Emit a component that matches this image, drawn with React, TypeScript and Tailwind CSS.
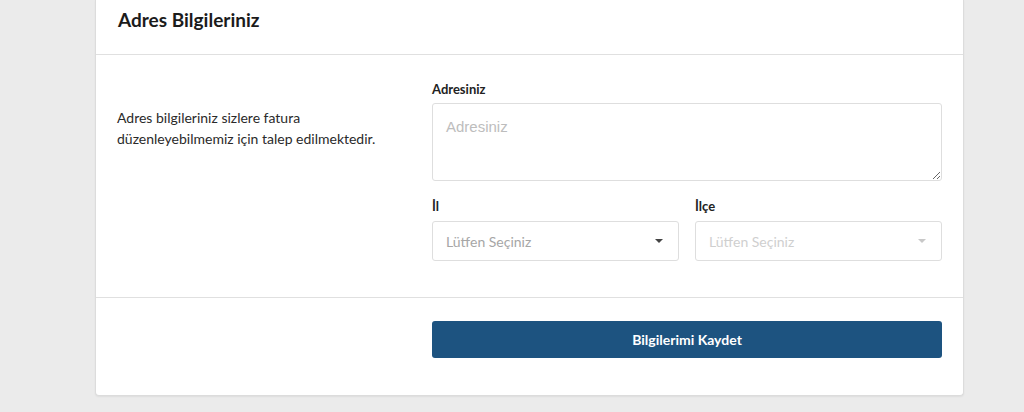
const Caret = ({ faded }: { faded?: boolean }) => (
  <svg width="8" height="4" viewBox="0 0 8 4" className={faded ? "text-[#c8c8c8]" : "text-[#444]"}>
    <path d="M0 0h8L4 4z" fill="currentColor" />
  </svg>
);

const Field = ({ label, faded }: { label: string; faded?: boolean }) => (
  <div className="flex-1">
    <label className="block text-[13px] leading-[18px] font-bold text-[#222] mb-[6px]">{label}</label>
    <div className="h-[40px] border border-[#dedede] rounded-[3px] bg-white flex items-center justify-between pl-[13px] pr-[15px]">
      <span className={`text-[14px] ${faded ? "text-[#cfcfcf]" : "text-[#a6a6a6]"}`}>Lütfen Seçiniz</span>
      <Caret faded={faded} />
    </div>
  </div>
);

export default function App() {
  return (
    <div className="min-h-[412px] bg-[#ebebeb] font-['Lato',sans-serif] overflow-hidden">
      <div className="ml-[95px] w-[869px] bg-white border border-t-0 border-[#dcdcdc] rounded-b-[4px] shadow-[0_1px_2px_rgba(0,0,0,0.06)]">
        <div className="h-[55px] border-b border-[#e0e0e0] px-[22px] pt-[8px]">
          <h2 className="text-[19px] leading-[24px] font-bold text-[#1b1b1b]">Adres Bilgileriniz</h2>
        </div>

        <div className="flex px-[21px] pt-[25px] pb-[36px] border-b border-[#e0e0e0]">
          <div className="w-[315px] pt-[27px]">
            <p className="text-[14px] leading-[21px] text-[#2a2a2a] w-[280px]">
              Adres bilgileriniz sizlere fatura düzenleyebilmemiz için talep edilmektedir.
            </p>
          </div>
          <div className="flex-1">
            <label className="block text-[13px] leading-[18px] font-bold text-[#222] mb-[5px]">Adresiniz</label>
            <textarea
              placeholder="Adresiniz"
              className="block w-full h-[78px] border border-[#dedede] rounded-[3px] px-[13px] py-[12px] text-[15px] font-['Liberation_Sans',sans-serif] placeholder:text-[#bdbdbd] outline-none"
            />
            <div className="flex gap-[16px] mt-[16px]">
              <Field label="İl" />
              <Field label="İlçe" faded />
            </div>
          </div>
        </div>

        <div className="flex px-[21px] pt-[23px] pb-[37px]">
          <div className="w-[315px]" />
          <button className="flex-1 h-[37px] bg-[#1d5380] rounded-[3px] text-white text-[14px] font-bold">
            Bilgilerimi Kaydet
          </button>
        </div>
      </div>
    </div>
  );
}
